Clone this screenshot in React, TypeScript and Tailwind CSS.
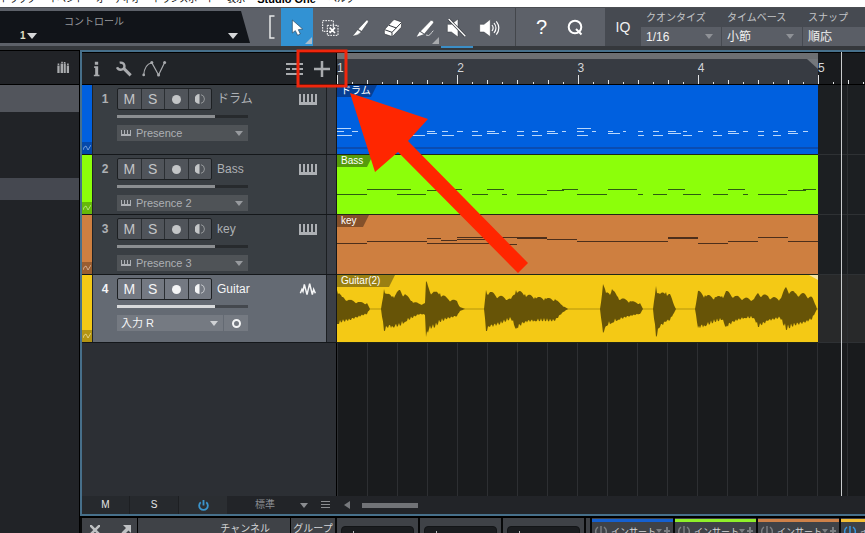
import React, { useState } from "react";

type Note = [start: number, end: number, y: number];
type Peak = [x: number, up: number, down: number];

interface Track {
  id: number;
  name: string;
  clip: string;
  device: string;
  height: string;
  color: string;
  dark: string;
  tabWidth: string;
  ink: string;
  notes: Note[];
  audio?: boolean;
}

const drumNotes: Note[] = [
  [0, 14, 43], [0, 7, 46], [0, 15, 50], [15, 21, 46], [30, 38, 46], [30, 41, 48], [45, 49, 46],
  [60, 66, 46], [60, 66, 50], [75, 88, 50], [90, 98, 46], [90, 100, 48], [105, 111, 46], [105, 117, 50],
  [120, 126, 46], [135, 141, 46], [135, 145, 50], [150, 158, 46], [150, 162, 48], [165, 169, 46],
  [180, 187, 46], [180, 187, 50], [195, 201, 46], [195, 205, 50], [210, 218, 46], [210, 221, 48],
  [225, 229, 46], [240, 254, 43], [240, 247, 46], [240, 251, 50], [255, 259, 46], [271, 276, 46],
  [271, 283, 48], [286, 289, 46], [301, 306, 46], [301, 307, 50], [316, 322, 46], [316, 326, 50],
  [331, 339, 46], [331, 344, 48], [346, 350, 46], [346, 355, 50], [361, 366, 46], [376, 380, 46],
  [376, 385, 50], [391, 399, 46], [391, 402, 48], [406, 411, 46], [421, 427, 46], [421, 427, 50],
  [436, 441, 46], [436, 444, 50], [451, 459, 46], [451, 461, 48], [466, 471, 46],
];

const bassNotes: Note[] = [
  [0, 30, 39], [30, 74, 34], [60, 89, 39], [90, 106, 35], [105, 125, 34], [135, 151, 39],
  [150, 167, 34], [165, 170, 39], [180, 210, 39], [210, 227, 35], [225, 241, 34], [240, 270, 39],
  [271, 300, 34], [301, 306, 39], [316, 330, 39], [331, 348, 34], [346, 364, 39], [376, 391, 39],
  [391, 408, 34], [406, 411, 39], [421, 450, 39], [451, 469, 35], [466, 479, 34],
];

const keyNotes: Note[] = [
  [0, 30, 28], [30, 90, 26], [90, 104, 23], [104, 120, 25], [90, 160, 28], [120, 180, 22],
  [120, 150, 24], [165, 180, 29], [180, 210, 22], [180, 210, 23], [210, 240, 24], [240, 331, 26],
  [331, 361, 22], [331, 361, 23], [361, 391, 28], [391, 421, 26], [421, 451, 22], [451, 481, 26],
];

const phrases: Peak[][] = [
  [[0, 19, 15], [2, 16, 15], [5, 12, 13], [13, 9, 11], [21, 7, 8], [30, 6, 5], [33, 0, 0]],
  [[44, 0, 0], [47, 20, 22], [50, 15, 18], [56, 13, 18], [63, 19, 17], [68, 15, 13], [75, 8, 9], [83, 5, 5],
    [88, 6, 6], [89, 28, 28], [92, 20, 20], [98, 17, 18], [103, 16, 13], [110, 11, 10], [120, 8, 7], [123, 2, 2], [128, 0, 0]],
  [[147, 0, 0], [149, 19, 22], [153, 17, 18], [163, 13, 15], [174, 10, 10], [179, 19, 20], [188, 15, 13],
    [198, 12, 12], [208, 11, 12], [218, 10, 12], [225, 4, 4], [231, 0, 0]],
  [[263, 0, 0], [266, 25, 24], [269, 16, 17], [275, 20, 14], [281, 12, 11], [293, 8, 7], [303, 6, 5], [306, 0, 0]],
  [[316, 0, 0], [319, 23, 28], [323, 15, 18], [329, 17, 13], [333, 15, 11], [337, 4, 4], [339, 0, 0]],
  [[358, 0, 0], [361, 18, 19], [368, 14, 17], [378, 12, 13], [385, 13, 11], [389, 18, 18], [398, 13, 12],
    [408, 11, 9], [417, 10, 9], [421, 16, 18], [431, 13, 12], [443, 10, 9], [449, 22, 21], [458, 16, 16],
    [468, 15, 14], [475, 12, 10], [479, 3, 2], [480, 0, 0]],
];

const tracks: Track[] = [
  { id: 1, name: "ドラム", clip: "ドラム", device: "Presence", height: "h-[70px]", color: "bg-[#0060df]", dark: "bg-[#063f94]", tabWidth: "w-10", ink: "#b9d7fb", notes: drumNotes },
  { id: 2, name: "Bass", clip: "Bass", device: "Presence 2", height: "h-[60px]", color: "bg-[#8cff0a]", dark: "bg-[#559b0b]", tabWidth: "w-9", ink: "#2c5c10", notes: bassNotes },
  { id: 3, name: "key", clip: "key", device: "Presence 3", height: "h-[60px]", color: "bg-[#ce7f40]", dark: "bg-[#84502a]", tabWidth: "w-8", ink: "#4d2f1b", notes: keyNotes },
  { id: 4, name: "Guitar", clip: "Guitar(2)", device: "入力 R", height: "h-[68px]", color: "bg-[#f4c915]", dark: "bg-[#9a8012]", tabWidth: "w-[58px]", ink: "#675407", notes: [], audio: true },
];

// Interpolates the peaks one pixel at a time and roughens the outline
const wavePath = (peaks: Peak[]) => {
  const top: string[] = [];
  const bottom: string[] = [];
  for (let i = 0; i < peaks.length - 1; i++) {
    const [x0, u0, d0] = peaks[i];
    const [x1, u1, d1] = peaks[i + 1];
    for (let x = x0; x < x1; x++) {
      const t = (x - x0) / (x1 - x0);
      const up = (u0 + (u1 - u0) * t) * (x === x0 ? 1 : 0.75 + 0.3 * Math.abs(Math.sin(x * 12.9)));
      const down = (d0 + (d1 - d0) * t) * (x === x0 ? 1 : 0.75 + 0.3 * Math.abs(Math.sin(x * 7.3)));
      top.push(`${x} ${(34 - up).toFixed(1)}`);
      bottom.unshift(`${x} ${(34 + down).toFixed(1)}`);
    }
  }
  return `M${top.join("L")}L${peaks[peaks.length - 1][0]} 34L${bottom.join("L")}Z`;
};

const Caret = ({ className = "w-2 h-[5px]" }: { className?: string }) => (
  <svg viewBox="0 0 10 6" className={`fill-current pointer-events-none ${className}`}>
    <path d="M0 0h10L5 6z" />
  </svg>
);

const Keys = () => (
  <svg viewBox="0 0 18 11" className="w-[18px] h-[11px] fill-current" shapeRendering="crispEdges">
    <path d="M0 0h2v8h2V0h2v8h2V0h2v8h2V0h2v8h2V0h2v11H0z" />
  </svg>
);

const SmallKeys = ({ className }: { className: string }) => (
  <svg viewBox="0 0 10 6" className={`w-[10px] h-[6px] fill-current ${className}`} shapeRendering="crispEdges">
    <path d="M0 0h1v4h2V0h1v4h2V0h1v4h2V0h1v6H0z" />
  </svg>
);

const AudioIcon = () => (
  <svg viewBox="676 244 54 42" className="w-[18px] h-[14px] fill-none stroke-current" strokeWidth="4.500">
    <path d="M680 278l5-12 3 6 4-21 8 31 8-33 8 33 4-16 5 12" />
  </svg>
);

const TOOLS = [
  {
    label: "Arrow",
    icon: (
      <>
        <path d="M127 60v39l9-7 7 14 8-4-6-13 13-2z" fill="#fff" stroke="#25435a" strokeWidth="2" />
        <path d="M165 132h21v-21z" fill="#a9bccb" />
      </>
    ),
  },
  {
    label: "Range",
    icon: (
      <g fill="none" stroke="#fff" strokeWidth="3">
        <path d="M218 62h32v32h-32z" strokeDasharray="5 3" />
        <path d="M232 76h32v30h-32z" strokeDasharray="5 3" />
        <path d="M239 83l16 16m0-16l-16 16" strokeWidth="5" />
      </g>
    ),
  },
  {
    label: "Split",
    icon: (
      <g fill="#fff" stroke="#33373d" strokeWidth="1.500">
        <path d="M350 60q6-1 5 6l-20 28-11-6z" />
        <path d="M323 89l11 7q-10 11-27 13z" />
      </g>
    ),
  },
  {
    label: "Eraser",
    icon: (
      <g stroke="#33373d" strokeWidth="2" strokeLinejoin="round">
        <path d="M403 89l27-29q2-2 5-1l17 6q4 2 3 6l-1 11-25 26q-2 2-5 1l-18-6q-4-2-3-6z" fill="#fff" />
        <path d="M404 89l22 8 28-29M426 97v12M417 76l22 8" fill="none" strokeWidth="3" />
      </g>
    ),
  },
  {
    label: "Paint",
    icon: (
      <>
        <path d="M543 61q8-1 8 7l-28 34-12-8z" fill="#fff" stroke="#33373d" strokeWidth="1.500" />
        <path d="M509 95l12 8-21 7z" fill="#fff" />
        <path d="M528 105q9 4 13-2t9-11" fill="none" stroke="#d4d6d8" strokeWidth="3" />
        <path d="M546 132h21v-21z" fill="#a8aaad" />
      </>
    ),
  },
  {
    label: "Mute",
    icon: (
      <>
        <path d="M592 73h12l20-16v54l-20-15h-12z" fill="#fff" stroke="#33373d" strokeWidth="1.500" />
        <path d="M596 57l50 52" stroke="#33373d" strokeWidth="8" />
        <path d="M596 57l50 52" stroke="#fff" strokeWidth="4" />
      </>
    ),
  },
  {
    label: "Listen",
    icon: (
      <>
        <path d="M689 73h13l19-15v52l-19-14h-13z" fill="#fff" stroke="#33373d" strokeWidth="1.500" />
        <path d="M726 75q7 9 0 18M732 69q12 15 0 30M739 64q15 20 0 40" fill="none" stroke="#fff" strokeWidth="3.500" />
      </>
    ),
  },
];

const Toolbar: React.FC = () => {
  const [tool, setTool] = useState("Arrow");

  return (
    <header className="shrink-0 bg-[#35383c] pb-px">
      <div className="flex h-[39px] bg-[#5d6169] border-t border-[#4a4d52] overflow-hidden">
        <div className="w-[250px] shrink-0 py-[3px]">
          <div className="h-full pt-1 bg-[#111419] [clip-path:polygon(0_0,241px_0,100%_100%,0_100%)] text-[#d6d7d9]">
            <div className="pl-16 text-[10px] leading-[14px] text-[#96989b]">コントロール</div>
            <div className="flex items-center justify-between pl-5 pr-3">
              <button className="flex items-center gap-px text-[10px] leading-[14px] font-bold text-[#e5e0c8]">
                1<Caret className="w-[10px] h-[6px] text-[#d6d7d9]" />
              </button>
              <button aria-label="コントロール">
                <Caret className="w-[10px] h-[6px]" />
              </button>
            </div>
          </div>
        </div>
        <div className="w-[31px] shrink-0 flex items-center justify-end pr-[6px]">
          <svg viewBox="0 0 6 24" className="w-[6px] h-6 fill-none stroke-[#e6e7e8]">
            <path d="M5.500 1H1v22h4.500" strokeWidth="1.500" />
          </svg>
        </div>
        {TOOLS.map((t, i) => (
          <button
            key={t.label}
            aria-label={t.label}
            onClick={() => setTool(t.label)}
            className={`w-8 shrink-0 ${tool === t.label ? "bg-[#3292d3]" : ""}`}
          >
            <svg viewBox={`${93 + 96 * i} 24 96 114`} className="w-8 h-[38px]">
              {t.icon}
            </svg>
          </button>
        ))}
        <div className="w-[11px] shrink-0 border-r border-[#43464b]" />
        <button className="w-[51px] shrink-0 text-xl leading-none text-white">?</button>
        <button aria-label="Q" className="w-4 shrink-0">
          <svg viewBox="0 0 16 17" className="w-4 h-[17px] fill-none stroke-white" strokeWidth="2">
            <circle cx="8" cy="8" r="6.300" />
            <path d="M9 10l5.500 5.500" />
          </svg>
        </button>
        <div className="w-[22px] shrink-0" />
        <div className="flex flex-1 bg-[#464a51]">
          <button className="w-9 shrink-0 text-sm text-[#f0f0f0]">IQ</button>
          {[
            ["クオンタイズ", "1/16"],
            ["タイムベース", "小節"],
            ["スナップ", "順応"],
          ].map(([label, value]) => (
            <label key={label} className="w-20 shrink-0 grow-0 mr-px last:grow last:mr-0 flex flex-col text-[#c3c5c8]">
              <span className="h-[19px] pl-[5px] text-[10px] leading-5 whitespace-nowrap">{label}</span>
              <span className="flex-1 relative flex items-center bg-[#5a5e66]">
                <select className="appearance-none w-full h-full pl-[5px] text-xs leading-4 text-[#f1f1f1]">
                  <option>{value}</option>
                </select>
                <Caret className="absolute right-2 w-2 h-[5px] text-[#8f9297]" />
              </span>
            </label>
          ))}
        </div>
      </div>
      {/* underline of the mute tool */}
      <div className="flex h-[3px] pl-[441px]">
        <div className="w-8 bg-[#3b8ec6] h-[2px]" />
      </div>
    </header>
  );
};

const TrackHeader: React.FC<{ track: Track }> = ({ track }) => {
  const on = track.audio;

  return (
    <div className={`w-[255px] shrink-0 flex border-b border-r border-[#14171a] ${on ? "bg-[#646a73] text-[#f4f5f6]" : "bg-[#393e43] text-[#adb0b4]"}`}>
      <div className={`w-[11px] shrink-0 flex flex-col justify-end border-r border-[#202327] ${track.color}`}>
        <div className={`h-3 flex items-center justify-center opacity-70 ${track.dark}`}>
          <svg viewBox="0 0 8 8" className="w-2 h-2 fill-none stroke-white/60">
            <path d="M0 6q1-4 3-4l2 4 3-5" />
          </svg>
        </div>
      </div>
      <div className="w-6 shrink-0 pt-[5px] text-center text-xs leading-[18px] font-bold">{track.id}</div>
      <div className="flex-1 pt-[3px]">
        <div className="flex items-center">
          <div className={`flex h-[22px] w-[95px] shrink-0 rounded-[2px] border border-[#1d2023] divide-x divide-[#2b2f33] ${on ? "bg-[#747982]" : "bg-[#50545a] text-[#c3c5c7]"}`}>
            <button className="flex-1 text-sm leading-5">M</button>
            <button className="flex-1 text-sm leading-5">S</button>
            <button aria-label="Record" className="flex-1 flex items-center justify-center">
              <span className="size-[9px] rounded-full bg-current" />
            </button>
            <button aria-label="Monitor" className="flex-1 flex items-center justify-center">
              <svg viewBox="0 0 10 10" className="size-[10px] fill-current">
                <path d="M4.500 0v10A5 5 0 0 1 4.500 0z" />
                <path d="M6 .7a4.400 4.400 0 0 1 0 8.600" fill="none" stroke="currentColor" opacity=".6" />
              </svg>
            </button>
          </div>
          <span className="pl-[5px] flex-1 text-xs leading-4 whitespace-nowrap">{track.name}</span>
          <div className="w-[18px] mr-[9px] flex justify-center">
            {track.audio ? <AudioIcon /> : <Keys />}
          </div>
        </div>
        <input
          type="range"
          aria-label={`${track.name} volume`}
          defaultValue={75}
          className={`block mt-[5px] w-[131px] h-[3px] appearance-none [&::-webkit-slider-thumb]:appearance-none [&::-webkit-slider-thumb]:w-0 ${
            on
              ? "bg-[linear-gradient(90deg,#d8dadc_75%,#44484e_75%)]"
              : "bg-[linear-gradient(90deg,#8b8e91_75%,#272a2d_75%)]"
          }`}
        />
        <div className="flex gap-px mt-[7px] w-[131px]">
          <div className={`relative flex flex-1 items-center h-4 ${on ? "bg-[#757a82]" : "bg-[#4f5357]"}`}>
            {!track.audio && <SmallKeys className="absolute left-1 pointer-events-none" />}
            <select
              aria-label={`${track.name} device`}
              className={`appearance-none w-full h-4 text-[11px] leading-4 ${track.audio ? "pl-1" : "pl-[19px]"}`}
            >
              <option>{track.device}</option>
            </select>
            <Caret className={`absolute right-[5px] w-2 h-[5px] ${on ? "text-[#cfd1d4]" : "text-[#979a9e]"}`} />
          </div>
          {track.audio && (
            <button aria-label="Channel mode" className="w-6 h-4 bg-[#757a82] flex items-center justify-center">
              <span className="size-[9px] rounded-full border-2 border-current" />
            </button>
          )}
        </div>
      </div>
      <div className="w-[10px] shrink-0 border-l border-[#1c1f22] bg-[#3b3f46]" />
    </div>
  );
};

const Clip: React.FC<{ track: Track }> = ({ track }) => (
  <div className={`relative w-[481px] shrink-0 border-b border-[#202718] ${track.color}`}>
    {track.id === 1 && <div className="absolute inset-x-0 bottom-[5px] h-[2px] bg-[#0a4cb2]" />}
    <svg className="absolute inset-0 w-full h-full" fill={track.ink} shapeRendering={track.audio ? "auto" : "crispEdges"}>
      {track.notes.map(([a, b, y], i) => (
        <rect key={i} x={a} y={y} width={b - a} height="1" />
      ))}
      {track.audio && (
        <>
          <rect y="33.500" width="481" height="1" opacity=".45" />
          {phrases.map((p, i) => (
            <path key={i} d={wavePath(p)} />
          ))}
          <path d="M472 0h9v5z" fill="#f8e4a0" />
        </>
      )}
    </svg>
    <div className={`relative h-3 pl-1 text-[10px] leading-3 text-white whitespace-nowrap [clip-path:polygon(0_0,100%_0,calc(100%-6px)_100%,0_100%)] ${track.tabWidth} ${track.dark}`}>
      {track.clip}
    </div>
  </div>
);

const Ruler: React.FC = () => (
  <div className="flex-1 flex flex-col bg-[#191b1e] overflow-hidden">
    <div className="h-[6px] w-[481px] bg-[#6d6f72]" />
    <div className="flex flex-1">
      <div className="relative w-[481px] shrink-0 grid grid-cols-4 bg-[#373b42] text-xs leading-[18px] text-[#d3d5d8]">
        {[1, 2, 3, 4].map((bar) => (
          <span key={bar}>{bar}</span>
        ))}
        <svg className="absolute right-0 top-0 w-[11px] h-[10px] fill-[#74777b]">
          <path d="M0 0h11v10z" />
        </svg>
      </div>
      <span className="text-xs leading-[18px] text-[#d3d5d8]">5</span>
    </div>
    <svg className="absolute left-0 bottom-0 w-full h-[9px] fill-[#dfe1e3]" shapeRendering="crispEdges">
      {Array.from({ length: 36 }, (_, i) => {
        const h = i % 8 === 0 ? 9 : i % 2 === 0 ? 4 : 2;
        return <rect key={i} x={Math.round(i * 15.04)} y={9 - h} width="1" height={h} />;
      })}
    </svg>
  </div>
);

const Arranger: React.FC = () => (
  <section className="flex-1 min-h-0 flex flex-col border-l-2 border-y-2 border-[#47708b] bg-[#191b1d] overflow-hidden relative">
    <div className="flex h-[33px] shrink-0 border-t border-black">
      <div className="w-[255px] shrink-0 flex items-center border-b border-r border-black bg-[#212428] text-[#a9abae]">
        <button aria-label="Info" className="w-7 flex justify-center">
          <svg viewBox="276 182 20 48" className="w-[7px] h-4 fill-current">
            <path d="M281 184h10v9h-10zM279 198h12v25h4v5h-17v-5h4v-20h-3z" />
          </svg>
        </button>
        <button aria-label="Setup" className="w-7 flex justify-center">
          <svg viewBox="348 184 48 48" className="size-4 fill-none stroke-current" strokeWidth="7">
            <path d="M371 206l21 21" strokeWidth="9" />
            <path d="M359 189q12-2 14 8t-8 13q-10 2-14-7" />
          </svg>
        </button>
        <button aria-label="Automation" className="w-8 flex justify-center">
          <svg viewBox="424 180 74 50" className="w-[25px] h-[17px] fill-none stroke-current" strokeWidth="3.500">
            <path d="M429 225q2-32 24-37l20 36 18-37" />
            <g fill="currentColor" stroke="none">
              <circle cx="429" cy="224" r="4" />
              <circle cx="453" cy="187" r="4.500" />
              <circle cx="473" cy="224" r="4.500" />
              <circle cx="491" cy="187" r="4.500" />
            </g>
          </svg>
        </button>
        <button aria-label="Track list" className="ml-auto w-7 flex justify-center">
          <svg viewBox="0 0 17 13" className="w-[17px] h-[13px] fill-current" shapeRendering="crispEdges">
            <path d="M0 1h17v2H0zM0 6h4v2H0zM6 6h5v2H6zM13 6h4v2h-4zM0 11h17v2H0z" />
          </svg>
        </button>
        <button aria-label="Add track" className="w-7 flex justify-center">
          <svg viewBox="0 0 16 16" className="size-4 stroke-current" strokeWidth="2.500">
            <path d="M8 0v16M0 8h16" />
          </svg>
        </button>
      </div>
      <div className="flex-1 flex relative border-b border-black">
        <Ruler />
      </div>
    </div>

    {tracks.map((t) => (
      <div key={t.id} className={`flex shrink-0 ${t.height}`}>
        <TrackHeader track={t} />
        <Clip track={t} />
        <div className={`flex-1 border-b border-[#2e3134] pl-[29px] ${t.audio ? "bg-[#28292a]" : "bg-[#1c1f22]"}`}>
          <div className="h-full w-px bg-[#2c2f32]" />
        </div>
      </div>
    ))}

    <div className="flex flex-1 min-h-0">
      <div className="w-[255px] shrink-0 bg-[#2c2f34] border-r border-black" />
      <div className="flex-1 bg-[repeating-linear-gradient(90deg,#2d2f32_0,#2d2f32_1px,transparent_1px,transparent_30px)]" />
    </div>

    <div className="flex h-[18px] shrink-0 items-stretch bg-[#222428] text-[#8b8d91]">
      <div className="w-[255px] shrink-0 flex text-[10px] leading-[18px]">
        <button className="w-12 text-[#e4e5e6] bg-[#26292d] border-r border-[#1d1f22]">M</button>
        <button className="w-[49px] text-[#e4e5e6] bg-[#26292d] border-r border-[#1d1f22]">S</button>
        <button aria-label="Power" className="w-12 flex items-center justify-center bg-[#2b2e32]">
          <svg viewBox="0 0 12 12" className="size-[11px] fill-none stroke-[#3a94cc]" strokeWidth="2">
            <path d="M3 2.500a4.700 4.700 0 1 0 6 0M6 0v6" />
          </svg>
        </button>
        <div className="relative flex-1 flex items-center">
          <select aria-label="Track size" className="appearance-none w-full h-full pl-7 text-[10px] leading-[18px]">
            <option>標準</option>
          </select>
          <Caret className="absolute right-[5px] w-2 h-[5px]" />
        </div>
        <button aria-label="Menu" className="w-6 flex items-center justify-center">
          <svg viewBox="0 0 9 8" className="w-[9px] h-2 stroke-current">
            <path d="M0 .5h9M0 3.500h9M0 6.500h9" />
          </svg>
        </button>
      </div>
      <div className="flex items-center pl-[7px] gap-3">
        <svg viewBox="0 0 6 8" className="w-[6px] h-2 fill-[#77797d]">
          <path d="M6 0v8L0 4z" />
        </svg>
        <div className="w-14 h-[5px] bg-[#717377]" />
      </div>
    </div>

    {/* playhead */}
    <div className="absolute left-[759px] top-0 bottom-[18px] w-px bg-[#c9ccce]" />
  </section>
);

const Mixer: React.FC = () => (
  <section className="h-[17px] shrink-0 flex gap-[2px] pl-[2px] bg-[#08090a] border-t-2 border-black overflow-hidden text-[10px] text-[#d5d6d8]">
    <div className="flex w-[253px] shrink-0 bg-[#3f4247]">
      <div className="w-14 shrink-0 flex items-start justify-between pl-2 pr-[6px] pt-[7px] border-r border-black">
        <svg viewBox="0 0 10 10" className="size-[10px] stroke-[#bfc1c3]" strokeWidth="2.500">
          <path d="M0 0l10 10M10 0L0 10" />
        </svg>
        <svg viewBox="0 0 10 10" className="size-[10px] fill-[#bfc1c3]">
          <path d="M2 0h8v8L7.500 5.500 3 10 .5 7.500 5 3z" />
        </svg>
      </div>
      <div className="flex-1 pr-5 pt-[5px] text-right leading-3 whitespace-nowrap border-r border-black">チャンネル</div>
      <div className="w-11 pt-[5px] leading-3 text-center whitespace-nowrap">グループ</div>
    </div>
    {[1, 2, 3].map((n) => (
      <div key={n} className="w-[81px] shrink-0 bg-[#3f4247] px-1 pt-2">
        <div className="h-4 rounded-t-sm bg-[#1b1d20] border border-[#131517] pl-[11px] pt-1">
          <div className="w-px h-4 bg-[#b8babc]" />
        </div>
      </div>
    ))}
    <div className="w-1 shrink-0 bg-[#3f4247]" />
    {[
      { bar: "bg-[#1560d0]", ring: "text-[#7b7e82]" },
      { bar: "bg-[#8ff02a]", ring: "text-[#7b7e82]" },
      { bar: "bg-[#ce8149]", ring: "text-[#7b7e82]" },
      { bar: "bg-[#f4bf35]", ring: "text-[#3a94dc]" },
    ].map(({ bar, ring }) => (
      <div key={bar} className="w-[81px] shrink-0 bg-[#3f4247]">
        <div className={`h-[3px] mt-px ${bar}`} />
        <div className="flex items-start gap-1 px-[3px] pt-1 leading-3 whitespace-nowrap">
          <svg viewBox="0 0 12 12" className={`size-3 shrink-0 fill-none stroke-current ${ring}`} strokeWidth="1.500">
            <path d="M3 1a5.500 5.500 0 0 0 0 9M9 1a5.500 5.500 0 0 1 0 9M6 0v7" />
          </svg>
          <span className="shrink-0 text-[9px]">インサート</span>
          <svg viewBox="0 0 14 9" className="w-[14px] h-[9px] mt-px -ml-1 fill-[#7b7e82]">
            <path d="M0 2h6L3 6zM10 0h2v3h2v2h-2v4h-2V5H8V3h2z" />
          </svg>
        </div>
      </div>
    ))}
  </section>
);

const App: React.FC = () => {
  return (
    <div className="relative h-screen flex flex-col overflow-hidden bg-[#1f2125] font-['Liberation_Sans','Noto_Sans_CJK_JP',sans-serif]">
      <nav className="h-[7px] shrink-0 bg-white text-black text-[9px] leading-3 overflow-hidden flex flex-col justify-end">
        <div className="flex shrink-0 gap-3 whitespace-nowrap pb-[2px]">
          <span>トラック</span>
          <span>イベント</span>
          <span>オーディオ</span>
          <span>トランスポート</span>
          <span>表示</span>
          <span className="text-[11px] font-bold">Studio One</span>
          <span>ヘルプ</span>
        </div>
      </nav>
      <Toolbar />
      <main className="flex flex-1 min-h-0">
        <aside className="w-20 shrink-0 bg-[#212327] border-r border-black border-t flex flex-col">
          <div className="h-[34px] shrink-0 flex items-center justify-end pr-[9px] border-b border-black">
            <svg viewBox="170 186 40 38" className="w-[13px] h-[13px] fill-[#a9abae]">
              <path d="M171 199h7v23h-7zM181 193h8v29h-8zM191 193h6v29h-6zM200 199h7v23h-7zM172 193h5v4h-5zM183 187h5v4h-5zM191 188h5v4h-5zM201 193h5v4h-5z" />
            </svg>
          </div>
          <div className="h-[27px] shrink-0 bg-[#52555c]" />
          <div className="h-[66px] shrink-0" />
          <div className="h-[22px] shrink-0 bg-[#454850]" />
        </aside>
        <div className="flex-1 min-w-0 flex flex-col">
          <Arranger />
          <Mixer />
        </div>
      </main>

      {/* callout pointing at the add-track button */}
      <svg className="absolute inset-0 w-full h-full pointer-events-none">
        <rect x="298" y="51" width="48" height="35" fill="none" stroke="#f0260c" strokeWidth="3" />
        <path d="M350 93L428 119 408 141 528 263 518 273 398 152 375 172Z" fill="#ff2600" />
      </svg>
    </div>
  );
};

export default App;
